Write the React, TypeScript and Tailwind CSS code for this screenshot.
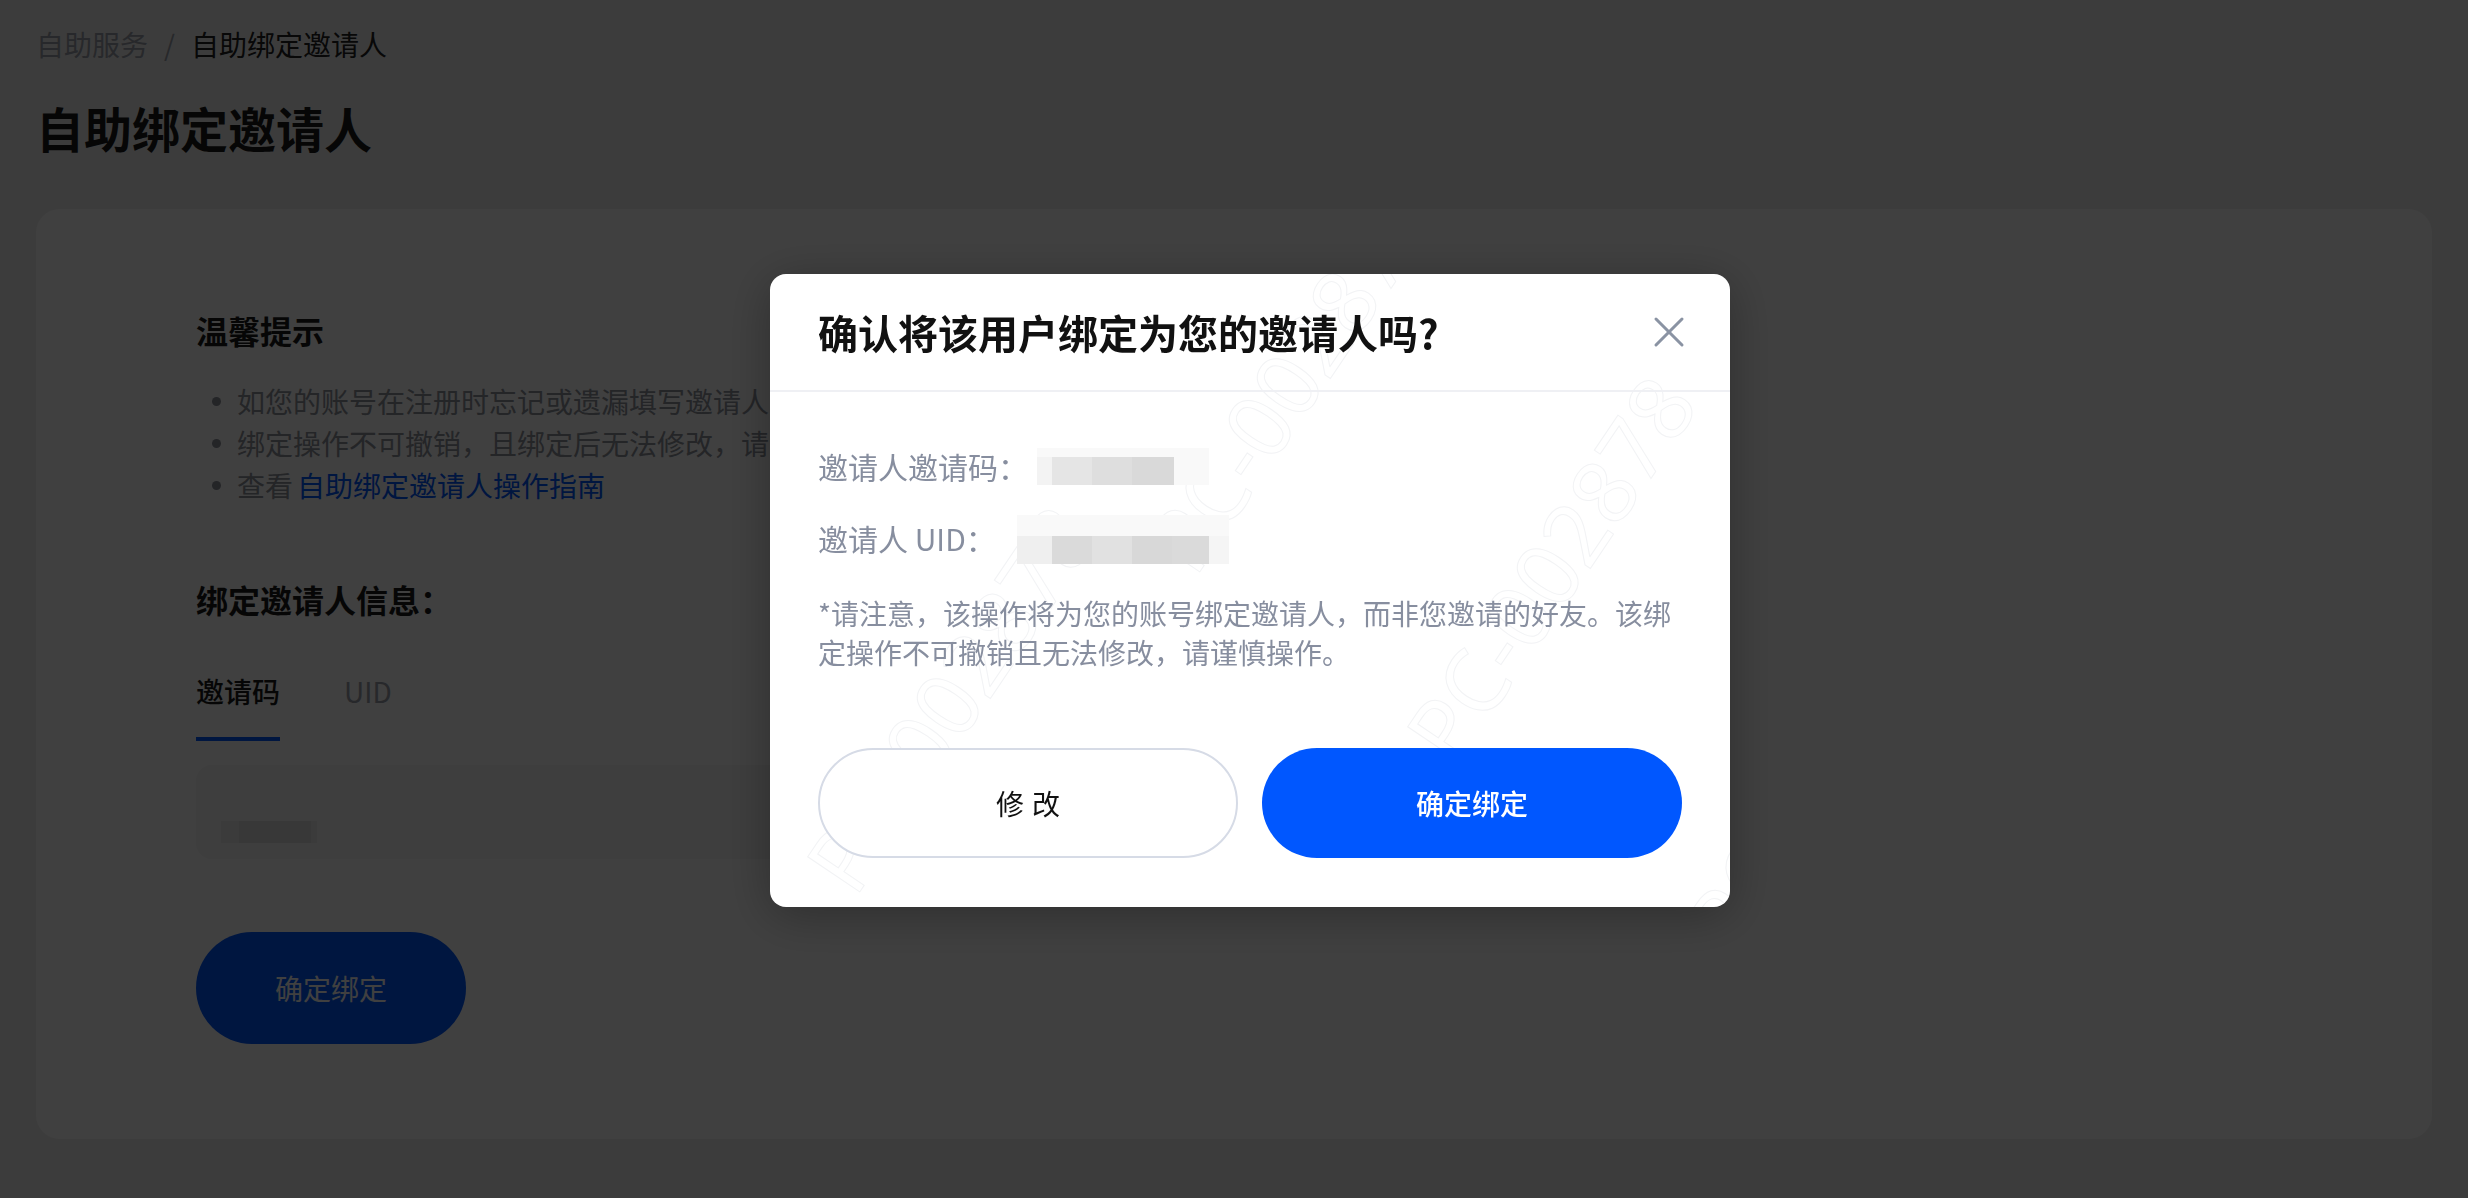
import React from 'react';
import { X } from 'lucide-react';

const tips = [
  '如您的账号在注册时忘记或遗漏填写邀请人，可在此页面自助绑定。',
  '绑定操作不可撤销，且绑定后无法修改，请谨慎操作。',
];

// pixelated (mosaic) placeholders for the masked values
const codeCells = [
  'w-[15px] bg-[#f3f3f3]',
  'w-[40px] bg-[#e5e5e5]',
  'w-[40px] bg-[#dedede]',
  'w-[42px] bg-[#d9d9d9]',
  'w-[35px] bg-[#f9f9f9]',
];

const uidCells = [
  'w-[35px] bg-[#efefef]',
  'w-[40px] bg-[#dadada]',
  'w-[40px] bg-[#e1e1e1]',
  'w-[40px] bg-[#d8d8d8]',
  'w-[37px] bg-[#dadada]',
  'w-[20px] bg-[#f5f5f5]',
];

const watermarks = [
  'left-[300px] top-[60px]',
  'left-[560px] top-[250px]',
  'left-[-40px] top-[380px]',
  'left-[840px] top-[440px]',
];

const Mosaic = ({ cells, top }: { cells: string[]; top: string }) => (
  <div className="flex flex-col">
    <div className={`${top} bg-[#f9f9f9]`} />
    <div className="flex h-[28px]">
      {cells.map((c, i) => (
        <div key={i} className={c} />
      ))}
    </div>
  </div>
);

const ConfirmModal = () => (
  <div className="fixed inset-0 bg-black/75 flex items-center justify-center pl-[32px] pb-[17px]">
    <div className="relative w-[960px] bg-white rounded-[16px] overflow-hidden shadow-[0_8px_48px_rgba(0,0,0,0.3)]">
      {watermarks.map((pos, i) => (
        <div
          key={i}
          aria-hidden
          className={`absolute ${pos} -rotate-[56deg] text-[88px] leading-none font-['Noto_Sans',sans-serif] text-transparent [-webkit-text-stroke:1px_#f2f3f5] select-none whitespace-nowrap pointer-events-none`}
        >
          PC-002878
        </div>
      ))}

      <div className="relative h-[118px] px-[48px] flex items-center justify-between border-b-2 border-[#eff0f4]">
        <h3 className="text-[40px] font-bold text-[#111111]">确认将该用户绑定为您的邀请人吗?</h3>
        <X className="w-[52px] h-[52px] -mr-[13px] text-[#8a93a3]" strokeWidth={1.4} />
      </div>

      <div className="relative px-[48px] pt-[50px] pb-[49px]">
        <div className="h-[48px] flex items-center text-[30px] text-[#878e9f]">
          <span>邀请人邀请码：</span>
          <div className="ml-[9px]">
            <Mosaic cells={codeCells} top="h-[9px]" />
          </div>
        </div>
        <div className="mt-[24px] h-[48px] flex items-center text-[30px] text-[#878e9f]">
          <span>邀请人 UID：</span>
          <div className="ml-[21px] mt-[2px]">
            <Mosaic cells={uidCells} top="h-[21px]" />
          </div>
        </div>
        <p className="mt-[32px] text-[28px] leading-[39px] text-[#878e9f]">
          *请注意，该操作将为您的账号绑定邀请人，而非您邀请的好友。该绑定操作不可撤销且无法修改，请谨慎操作。
        </p>
        <div className="mt-[76px] grid grid-cols-2 gap-[24px]">
          <button className="h-[110px] rounded-full border-2 border-[#d6dbe6] bg-white text-[28px] text-[#111111] tracking-[8px] pl-[8px]">
            修改
          </button>
          <button className="h-[110px] rounded-full bg-[#0057ff] text-[28px] font-medium text-white">
            确定绑定
          </button>
        </div>
      </div>
    </div>
  </div>
);

export default function App() {
  return (
    <div className="min-h-screen bg-[#f0f0f0] px-[36px] pt-[23px] pb-[58px] font-[Noto_Sans_CJK_SC,sans-serif]">
      <div className="flex items-center text-[28px] leading-[42px]">
        <span className="text-[#9ca0aa]">自助服务</span>
        <span className="mx-[16px] text-[#9ca0aa]">/</span>
        <span className="text-[#222222]">自助绑定邀请人</span>
      </div>
      <h1 className="mt-[30px] text-[48px] leading-[64px] font-bold text-[#1a1a1a]">自助绑定邀请人</h1>

      <div className="mt-[50px] bg-white rounded-[24px] pl-[160px] pr-[160px] pt-[99px] pb-[95px]">
        <h2 className="text-[32px] leading-[44px] font-bold text-[#1a1a1a]">温馨提示</h2>
        <ul className="mt-[28px] text-[28px] leading-[42px] text-[#8e929c]">
          {tips.map((t) => (
            <li key={t} className="flex items-center">
              <span className="w-[9px] h-[9px] rounded-full bg-[#8e929c] ml-[16px] mr-[16px]" />
              {t}
            </li>
          ))}
          <li className="flex items-center">
            <span className="w-[9px] h-[9px] rounded-full bg-[#8e929c] ml-[16px] mr-[16px]" />
            查看<span className="ml-[4px] text-[#0057ff]">自助绑定邀请人操作指南</span>
          </li>
        </ul>

        <h2 className="mt-[71px] text-[32px] leading-[44px] font-bold text-[#1a1a1a]">绑定邀请人信息：</h2>
        <div className="mt-[49px] flex gap-[64px] text-[28px] leading-[42px]">
          <div className="pb-[25px] border-b-4 border-[#0057ff] font-medium text-[#1a1a1a]">邀请码</div>
          <div className="pb-[25px] text-[#9ca0aa]">UID</div>
        </div>
        <div className="mt-[24px] w-[1200px] h-[94px] rounded-[16px] bg-[#f5f5f6] flex items-center px-[25px]">
          <div className="flex h-[22px] mt-[40px]">
            <div className="w-[18px] bg-[#ececec]" />
            <div className="w-[72px] bg-[#e0e0e0]" />
            <div className="w-[6px] bg-[#ececec]" />
          </div>
        </div>
        <button className="mt-[73px] w-[270px] h-[112px] rounded-full bg-[#0057ff] text-[28px] text-white">
          确定绑定
        </button>
      </div>

      <ConfirmModal />
    </div>
  );
}
